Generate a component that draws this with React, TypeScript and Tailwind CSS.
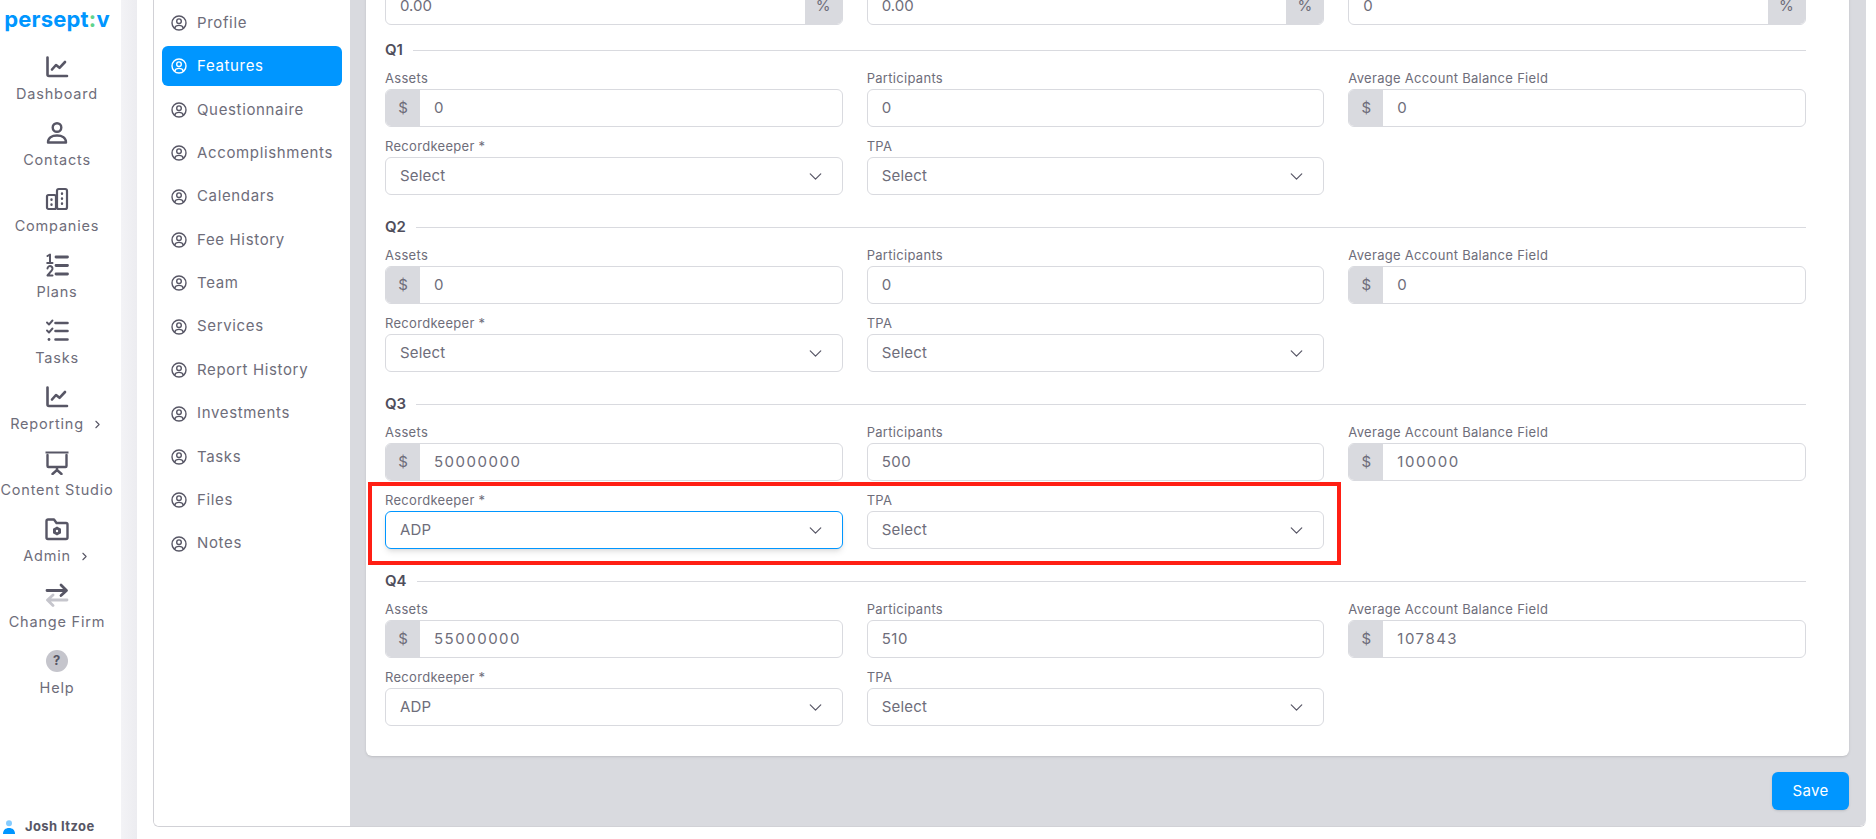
import { ChevronDown, ChevronRight } from 'lucide-react';
import type { ReactNode } from 'react';

const ICON_DARK = '#575665';

const ChartIcon = () => (
  <svg width="24" height="24" viewBox="0 0 24 24" fill="none" stroke={ICON_DARK} strokeWidth="2.6" strokeLinecap="round" strokeLinejoin="round">
    <path d="M2.500 2.500v17a1.500 1.500 0 0 0 1.500 1.500h18" />
    <path d="M7 14.500l4-4.500 3.500 2.800 5.500-5.800" />
  </svg>
);

const ContactIcon = () => (
  <svg width="24" height="24" viewBox="0 0 24 24" fill="none" stroke={ICON_DARK} strokeWidth="2.4" strokeLinejoin="round">
    <circle cx="12" cy="6.500" r="4.300" />
    <path d="M3 21.500c0-4.500 3.800-7 9-7s9 2.500 9 7z" />
  </svg>
);

const CompanyIcon = () => (
  <svg width="24" height="24" viewBox="0 0 24 24" fill="none" stroke={ICON_DARK} strokeWidth="2.2" strokeLinejoin="round">
    <rect x="2" y="8" width="9" height="14" rx="1.500" />
    <rect x="12" y="2" width="10" height="20" rx="1.800" />
    <path d="M6.500 12.500v.2M6.500 17.500v.2M17 6.500v.2M17 11.500v.2M17 16.500v.2" strokeWidth="2.400" strokeLinecap="round" />
  </svg>
);

const PlansIcon = () => (
  <svg width="24" height="24" viewBox="0 0 24 24" fill="none" stroke={ICON_DARK} strokeWidth="2.800" strokeLinecap="round" strokeLinejoin="round">
    <path d="M11 4h11.500M11 12.500h11.500M11 21h11.500" />
    <path d="M2.500 3l2.500-1.500v8M2.200 10h5.300" strokeWidth="2" />
    <path d="M2.500 15.500a2.500 2.500 0 1 1 4.300 1.800L2.500 22.500h5" strokeWidth="2" />
  </svg>
);

const TasksIcon = () => (
  <svg width="24" height="24" viewBox="0 0 24 24" fill="none" stroke={ICON_DARK} strokeWidth="2.600" strokeLinecap="round" strokeLinejoin="round">
    <path d="M10.500 4h12M10.500 12h12M10.500 20.500h12" />
    <path d="M2 3.500l2 2 3.500-4M2 11.500l2 2 3.500-4" strokeWidth="1.900" />
    <circle cx="4" cy="20.500" r="1.400" fill={ICON_DARK} stroke="none" />
  </svg>
);

const StudioIcon = () => (
  <svg width="24" height="24" viewBox="0 0 24 24" fill="none" stroke={ICON_DARK} strokeWidth="2.400" strokeLinecap="round" strokeLinejoin="round">
    <path d="M0.500 1.500h23" strokeWidth="2" strokeLinecap="butt" />
    <path d="M2.500 4v11a1 1 0 0 0 1 1h17a1 1 0 0 0 1-1V4" />
    <path d="M12 16.500v2.500M7.500 23l4.500-4 4.500 4" />
  </svg>
);

const AdminIcon = () => (
  <svg width="24" height="24" viewBox="0 0 24 24" fill="none" stroke={ICON_DARK} strokeWidth="2.400" strokeLinejoin="round">
    <path d="M1.500 4a1.500 1.500 0 0 1 1.500-1.500h6l2.500 3.500H21a1.500 1.500 0 0 1 1.500 1.500V20.500A1.500 1.500 0 0 1 21 22H3a1.500 1.500 0 0 1-1.500-1.500z" />
    <path d="M12 9.500l4 2.250v4.500l-4 2.250-4-2.250v-4.500z" fill={ICON_DARK} stroke="none" />
    <circle cx="12" cy="14" r="1.200" fill="#ffffff" stroke="none" />
  </svg>
);

const FirmIcon = () => (
  <svg width="24" height="24" viewBox="0 0 24 24" fill="none" strokeWidth="2.800" strokeLinecap="round" strokeLinejoin="round">
    <path d="M2 7.500h19M16 2l5.500 5.500-5.500 5" stroke={ICON_DARK} />
    <path d="M22 17H3M8 12l-5.500 5L8 22.500" stroke="#c5c5cc" />
  </svg>
);

const HelpIcon = () => (
  <div className="flex h-[22px] w-[22px] items-center justify-center rounded-full bg-[#c5c5cc] text-[13px] font-bold text-[#575665]">?</div>
);

const UserCircleIcon = ({ color }: { color: string }) => (
  <svg width="16" height="16" viewBox="0 0 16 16" fill="none" stroke={color} strokeWidth="1.400" className="shrink-0">
    <circle cx="8" cy="8" r="7" />
    <circle cx="8" cy="6.200" r="2.300" />
    <path d="M3.600 13.200c.6-2 2.300-2.800 4.400-2.800s3.800.8 4.400 2.800" />
  </svg>
);

const MAIN_NAV: { label: string; icon: ReactNode; arrow?: boolean }[] = [
  { label: 'Dashboard', icon: <ChartIcon /> },
  { label: 'Contacts', icon: <ContactIcon /> },
  { label: 'Companies', icon: <CompanyIcon /> },
  { label: 'Plans', icon: <PlansIcon /> },
  { label: 'Tasks', icon: <TasksIcon /> },
  { label: 'Reporting', icon: <ChartIcon />, arrow: true },
  { label: 'Content Studio', icon: <StudioIcon /> },
  { label: 'Admin', icon: <AdminIcon />, arrow: true },
  { label: 'Change Firm', icon: <FirmIcon /> },
  { label: 'Help', icon: <HelpIcon /> },
];

const SUB_NAV = [
  'Profile',
  'Features',
  'Questionnaire',
  'Accomplishments',
  'Calendars',
  'Fee History',
  'Team',
  'Services',
  'Report History',
  'Investments',
  'Tasks',
  'Files',
  'Notes',
];

function Field({ label, children }: { label: string; children: ReactNode }) {
  return (
    <div>
      <div className="flex h-5 items-center text-[13px] tracking-[0.3px] text-[#6e6d7a]">{label}</div>
      {children}
    </div>
  );
}

function Money({ value }: { value: string }) {
  return (
    <div className="flex h-[38px] overflow-hidden rounded-md border border-[#d9dadf] bg-white text-[15px] text-[#6e6d7a]">
      <span className="flex w-[34px] shrink-0 items-center justify-center bg-[#d9dadf]">$</span>
      <span className="flex items-center pl-[14px] tracking-[1.5px]">{value}</span>
    </div>
  );
}

function Plain({ value }: { value: string }) {
  return (
    <div className="flex h-[38px] items-center rounded-md border border-[#d9dadf] bg-white pl-[14px] text-[15px] tracking-[0.5px] text-[#6e6d7a]">{value}</div>
  );
}

function Percent({ value }: { value: string }) {
  return (
    <div className="flex h-[38px] justify-between overflow-hidden rounded-md border border-[#d9dadf] bg-white text-[15px] text-[#6e6d7a]">
      <span className="flex items-center pl-[14px]">{value}</span>
      <span className="flex w-[37px] shrink-0 items-center justify-center bg-[#d9dadf]">%</span>
    </div>
  );
}

function SelectBox({ value, focused }: { value: string; focused?: boolean }) {
  return (
    <div
      className={
        focused
          ? 'flex h-[38px] items-center justify-between rounded-md border border-[#0096ff] bg-white pr-[16px] pl-[14px] text-[15px] tracking-[0.2px] text-[#6e6d7a] shadow-md'
          : 'flex h-[38px] items-center justify-between rounded-md border border-[#d9dadf] bg-white pr-[16px] pl-[14px] text-[15px] tracking-[0.2px] text-[#6e6d7a]'
      }
    >
      <span>{value}</span>
      <ChevronDown size={21} strokeWidth={1.4} className="text-[#575665]" />
    </div>
  );
}

interface Quarter {
  title: string;
  assets: string;
  participants: string;
  average: string;
  keeper: string;
  highlight?: boolean;
  focused?: boolean;
}

const QUARTERS: Quarter[] = [
  { title: 'Q1', assets: '0', participants: '0', average: '0', keeper: 'Select' },
  { title: 'Q2', assets: '0', participants: '0', average: '0', keeper: 'Select' },
  { title: 'Q3', assets: '50000000', participants: '500', average: '100000', keeper: 'ADP', highlight: true, focused: true },
  { title: 'Q4', assets: '55000000', participants: '510', average: '107843', keeper: 'ADP' },
];

function QuarterBlock({ q }: { q: Quarter }) {
  return (
    <section className="mt-[21px] first-of-type:mt-[14px]">
      <div className="flex h-[22px] items-center gap-[10px]">
        <span className="text-[15px] font-semibold text-[#4f4e5c]">{q.title}</span>
        <div className="h-px flex-1 bg-[#d9dadf]" />
      </div>
      <div className="mt-2 grid grid-cols-3 gap-x-6">
        <Field label="Assets"><Money value={q.assets} /></Field>
        <Field label="Participants"><Plain value={q.participants} /></Field>
        <Field label="Average Account Balance Field"><Money value={q.average} /></Field>
      </div>
      <div className="relative mt-[10px] grid grid-cols-3 gap-x-6">
        <Field label={'Recordkeeper *'}><SelectBox value={q.keeper} focused={q.focused} /></Field>
        <Field label="TPA"><SelectBox value="Select" /></Field>
        {q.highlight && (
          <div className="absolute top-[-9px] left-[-17px] h-[83px] w-[973px] border-4 border-[#ff1f14]" />
        )}
      </div>
    </section>
  );
}

export default function App() {
  return (
    <div className="flex h-[839px] w-[1876px] overflow-hidden bg-white font-[family-name:Inter,sans-serif]">
      <aside className="flex w-[121px] shrink-0 flex-col bg-white">
        <div className="h-[52px] w-[114px] pt-[4px] text-center text-[22px] leading-[30px] font-bold tracking-[0.2px] text-[#0096ff]">
          persept<span className="text-[#5fd38d]">:</span>v
        </div>
        <nav className="w-[114px]">
          {MAIN_NAV.map(item => (
            <div key={item.label} className="flex h-[66px] flex-col items-center pt-[3px] text-[14.5px] tracking-[0.8px] whitespace-nowrap text-[#6e6d7a]">
              <div className="flex h-6 items-center">{item.icon}</div>
              <div className="mt-[5px] flex h-5 items-center gap-[7px]">
                {item.label}
                {item.arrow && <ChevronRight size={13} strokeWidth={2} className="text-[#575665]" />}
              </div>
            </div>
          ))}
        </nav>
        <div className="mt-auto mb-[3px] flex h-[18px] items-center gap-[10px] pl-[3px] text-[13px] font-bold tracking-[0.4px] text-[#575665]">
          <svg width="12" height="14" viewBox="0 0 12 14">
            <circle cx="6" cy="3.200" r="3" fill="#85ccff" />
            <path d="M0 14c0-4 2.500-6 6-6s6 2 6 6z" fill="#0096ff" />
          </svg>
          Josh Itzoe
        </div>
      </aside>
      <div className="w-4 shrink-0 bg-gradient-to-r from-[#f3f3f6] to-[#ececf0]" />
      <main className="min-w-0 flex-1 pr-[10px] pb-[12px] pl-4">
        <div className="flex h-full overflow-hidden rounded-b-md border-b border-l border-[#d1d1d6]">
          <div className="w-[196px] shrink-0 bg-white px-2 pt-[3px]">
            <div className="flex flex-col gap-[3.4px]">
              {SUB_NAV.map(name => (
                <div
                  key={name}
                  className={
                    name === 'Features'
                      ? 'flex h-10 items-center gap-[10px] rounded-md bg-[#0096ff] pl-[9px] text-[15px] tracking-[0.65px] text-white'
                      : 'flex h-10 items-center gap-[10px] pl-[9px] text-[15px] tracking-[0.65px] text-[#6e6d7a]'
                  }
                >
                  <UserCircleIcon color={name === 'Features' ? '#ffffff' : '#575665'} />
                  {name}
                </div>
              ))}
            </div>
          </div>
          <div className="flex min-w-0 flex-1 flex-col rounded-br-md bg-[#d9dadf] pr-[17px] pl-4">
            <div className="-mt-[13px] rounded-b-md bg-white pr-[43px] pb-[30px] pl-[19px] shadow-sm">
              <div className="grid grid-cols-3 gap-x-6">
                <Percent value="0.00" />
                <Percent value="0.00" />
                <Percent value="0" />
              </div>
              {QUARTERS.map(q => <QuarterBlock key={q.title} q={q} />)}
            </div>
            <div className="mt-4 flex justify-end">
              <button type="button" className="h-[38px] w-[77px] rounded-md bg-[#0096ff] text-[15px] tracking-[0.3px] text-white shadow-sm">Save</button>
            </div>
          </div>
        </div>
      </main>
    </div>
  );
}
